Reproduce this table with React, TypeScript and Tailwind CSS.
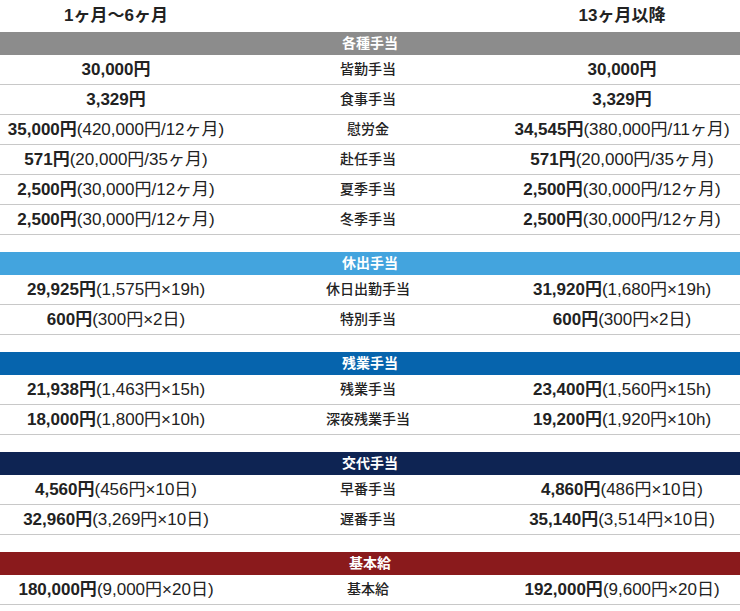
type Row = { left: [string, string]; label: string; right: [string, string] };
type Section = { title: string; bar: string; rows: Row[] };

const sections: Section[] = [
  {
    title: "各種手当",
    bar: "bg-[#8c8c8c]",
    rows: [
      { left: ["30,000円", ""], label: "皆勤手当", right: ["30,000円", ""] },
      { left: ["3,329円", ""], label: "食事手当", right: ["3,329円", ""] },
      { left: ["35,000円", "(420,000円/12ヶ月)"], label: "慰労金", right: ["34,545円", "(380,000円/11ヶ月)"] },
      { left: ["571円", "(20,000円/35ヶ月)"], label: "赴任手当", right: ["571円", "(20,000円/35ヶ月)"] },
      { left: ["2,500円", "(30,000円/12ヶ月)"], label: "夏季手当", right: ["2,500円", "(30,000円/12ヶ月)"] },
      { left: ["2,500円", "(30,000円/12ヶ月)"], label: "冬季手当", right: ["2,500円", "(30,000円/12ヶ月)"] },
    ],
  },
  {
    title: "休出手当",
    bar: "bg-[#43a4de]",
    rows: [
      { left: ["29,925円", "(1,575円×19h)"], label: "休日出勤手当", right: ["31,920円", "(1,680円×19h)"] },
      { left: ["600円", "(300円×2日)"], label: "特別手当", right: ["600円", "(300円×2日)"] },
    ],
  },
  {
    title: "残業手当",
    bar: "bg-[#0664ad]",
    rows: [
      { left: ["21,938円", "(1,463円×15h)"], label: "残業手当", right: ["23,400円", "(1,560円×15h)"] },
      { left: ["18,000円", "(1,800円×10h)"], label: "深夜残業手当", right: ["19,200円", "(1,920円×10h)"] },
    ],
  },
  {
    title: "交代手当",
    bar: "bg-[#0e2453]",
    rows: [
      { left: ["4,560円", "(456円×10日)"], label: "早番手当", right: ["4,860円", "(486円×10日)"] },
      { left: ["32,960円", "(3,269円×10日)"], label: "遅番手当", right: ["35,140円", "(3,514円×10日)"] },
    ],
  },
  {
    title: "基本給",
    bar: "bg-[#8a1a1c]",
    rows: [
      { left: ["180,000円", "(9,000円×20日)"], label: "基本給", right: ["192,000円", "(9,600円×20日)"] },
    ],
  },
];

function Amount({ value }: { value: [string, string] }) {
  return (
    <div className="text-center text-[17px] leading-none whitespace-nowrap text-[#222]">
      <span className="font-bold">{value[0]}</span>
      {value[1] && <span className="font-normal">{value[1]}</span>}
    </div>
  );
}

export default function App() {
  return (
    <div
      className="w-[740px] h-[611px] bg-white overflow-hidden"
      style={{ fontFamily: '"Liberation Sans", "Noto Sans CJK JP", sans-serif' }}
    >
      {/* column heads */}
      <div className="grid grid-cols-[232px_1fr_236px] h-[32px] items-center text-[17px] font-bold text-[#222]">
        <div className="text-center">1ヶ月〜6ヶ月</div>
        <div />
        <div className="text-center">13ヶ月以降</div>
      </div>

      {sections.map((section, i) => (
        <div key={section.title} className={i > 0 ? "mt-[17px]" : ""}>
          <div
            className={`${section.bar} h-[23px] flex items-center justify-center text-white text-[14px] font-semibold`}
          >
            {section.title}
          </div>
          {section.rows.map((row) => (
            <div
              key={row.label}
              className="grid grid-cols-[232px_1fr_236px] h-[30px] items-center border-b border-[#c8c8c8]"
            >
              <Amount value={row.left} />
              <div className="text-center text-[14px] font-medium text-[#222]">{row.label}</div>
              <Amount value={row.right} />
            </div>
          ))}
        </div>
      ))}
    </div>
  );
}
